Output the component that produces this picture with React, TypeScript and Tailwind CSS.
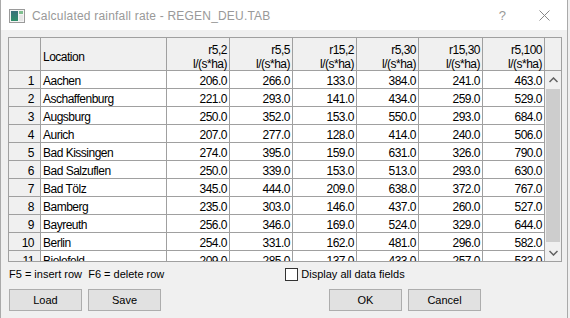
import React from 'react';

type Row = [string, number[]];

const rows: Row[] = [
  ['Aachen', [206, 266, 133, 384, 241, 463]],
  ['Aschaffenburg', [221, 293, 141, 434, 259, 529]],
  ['Augsburg', [250, 352, 153, 550, 293, 684]],
  ['Aurich', [207, 277, 128, 414, 240, 506]],
  ['Bad Kissingen', [274, 395, 159, 631, 326, 790]],
  ['Bad Salzuflen', [250, 339, 153, 513, 293, 630]],
  ['Bad Tölz', [345, 444, 209, 638, 372, 767]],
  ['Bamberg', [235, 303, 146, 437, 260, 527]],
  ['Bayreuth', [256, 346, 169, 524, 329, 644]],
  ['Berlin', [254, 331, 162, 481, 296, 582]],
  ['Bielefeld', [209, 285, 137, 433, 257, 533]],
];

// value column titles and widths (incl. right grid line)
const cols = [
  { name: 'r5,2', w: 'w-[63px]' },
  { name: 'r5,5', w: 'w-[63px]' },
  { name: 'r15,2', w: 'w-[64px]' },
  { name: 'r5,30', w: 'w-[62px]' },
  { name: 'r15,30', w: 'w-[64px]' },
  { name: 'r5,100', w: 'w-[62px]' },
];

const ui = { fontFamily: '"Liberation Sans", Arial, sans-serif' };

function WinIcon() {
  return (
    <svg width="16" height="14" viewBox="0 0 16 14" aria-hidden="true">
      <defs>
        <linearGradient id="g" x1="0" y1="0" x2="0" y2="1">
          <stop offset="0" stopColor="#3a6f7a" />
          <stop offset="1" stopColor="#2f8f6a" />
        </linearGradient>
      </defs>
      <rect x="0.5" y="0.5" width="15" height="13" fill="#f4f4f4" stroke="#9a9a9a" />
      <rect x="2" y="2" width="7" height="10" fill="url(#g)" />
      <rect x="10" y="2" width="4" height="3" fill="#7fbf8f" />
      <rect x="10" y="6" width="4" height="6" fill="#e6e6e6" />
    </svg>
  );
}

function Button({ label, className }: { label: string; className?: string }) {
  return (
    <button
      className={`h-[22px] w-[73px] border border-[#adadad] bg-[#e1e1e1] text-[11px] text-black ${className ?? ''}`}
      style={ui}
    >
      {label}
    </button>
  );
}

export default function App() {
  return (
    <div className="relative h-[318px] w-[570px] overflow-hidden bg-[#f0f0f0]" style={ui}>
      <div className="flex h-[318px] w-[568px] flex-col border-x border-[#aaaaaa] bg-[#f0f0f0]">
        {/* Title bar */}
        <div className="flex h-[30px] shrink-0 items-center bg-white pl-[8px] pt-[1px]">
          <WinIcon />
          <span className="ml-[7px] text-[12px] tracking-[0.2px] text-[#999999]">
            Calculated rainfall rate - REGEN_DEU.TAB
          </span>
          <span className="ml-auto mr-[33px] text-[13px] text-[#999999]">?</span>
          <svg width="11" height="11" viewBox="0 0 11 11" className="mr-[17px]" aria-hidden="true">
            <path d="M0.5 0.5 L10.5 10.5 M10.5 0.5 L0.5 10.5" stroke="#888888" strokeWidth="1" />
          </svg>
        </div>

        {/* Grid */}
        <div className="ml-[7px] mt-[7px] flex h-[225px] w-[554px] flex-col border border-[#a0a0a0] bg-white text-[12px] tracking-[-0.5px] text-black">
          <div className="flex h-[33px] shrink-0 bg-[#f0f0f0]">
            <div className="w-[32px] border-b border-r border-[#a0a0a0]" />
            <div className="flex w-[126px] items-center border-b border-r border-[#a0a0a0] pl-[2px] pt-[6px]">
              Location
            </div>
            {cols.map((c) => (
              <div
                key={c.name}
                className={`${c.w} flex flex-col justify-center border-b border-r border-[#a0a0a0] pr-[2px] pt-[5px] text-right leading-[14px]`}
              >
                <span>{c.name}</span>
                <span>l/(s*ha)</span>
              </div>
            ))}
            <div className="flex-1 border-b border-[#a0a0a0]" />
          </div>

          <div className="flex min-h-0 flex-1">
            <div className="w-[536px] overflow-hidden">
              {rows.map(([name, vals], i) => (
                <div key={name} className="flex h-[18px]">
                  <div className="w-[32px] border-b border-r border-[#a0a0a0] bg-[#f0f0f0] pr-[6px] pt-[3px] text-right leading-[14px]">
                    {i + 1}
                  </div>
                  <div className="w-[126px] border-b border-r border-[#a0a0a0] pl-[2px] pt-[3px] leading-[14px]">
                    {name}
                  </div>
                  {vals.map((v, j) => (
                    <div
                      key={j}
                      className={`${cols[j].w} border-b border-r border-[#a0a0a0] pr-[2px] pt-[3px] text-right leading-[14px]`}
                    >
                      {v.toFixed(1)}
                    </div>
                  ))}
                </div>
              ))}
            </div>

            {/* Scrollbar */}
            <div className="flex flex-1 flex-col bg-[#f0f0f0]">
              <div className="flex h-[17px] items-center justify-center">
                <svg width="9" height="6" viewBox="0 0 9 6" aria-hidden="true">
                  <path d="M0.5 5 L4.5 1 L8.5 5" fill="none" stroke="#606060" strokeWidth="1.5" />
                </svg>
              </div>
              <div className="flex-1 px-[1px] pt-[1px]">
                <div className="h-[153px] bg-[#cdcdcd]" />
              </div>
              <div className="flex h-[17px] items-center justify-center">
                <svg width="9" height="6" viewBox="0 0 9 6" aria-hidden="true">
                  <path d="M0.5 1 L4.5 5 L8.5 1" fill="none" stroke="#606060" strokeWidth="1.5" />
                </svg>
              </div>
            </div>
          </div>
        </div>

        {/* Hints + checkbox */}
        <div className="mt-[5px] flex h-[15px] items-center text-[11px] text-black">
          <span className="ml-[8px] whitespace-pre">F5 = insert row  F6 = delete row</span>
          <label className="ml-[121px] flex items-center">
            <span className="h-[13px] w-[13px] border border-[#333333] bg-white" />
            <span className="ml-[3px]">Display all data fields</span>
          </label>
        </div>

        {/* Buttons */}
        <div className="mt-[7px] flex">
          <Button label="Load" className="ml-[8px]" />
          <Button label="Save" className="ml-[6px]" />
          <Button label="OK" className="ml-[168px]" />
          <Button label="Cancel" className="ml-[6px]" />
        </div>
      </div>
    </div>
  );
}
